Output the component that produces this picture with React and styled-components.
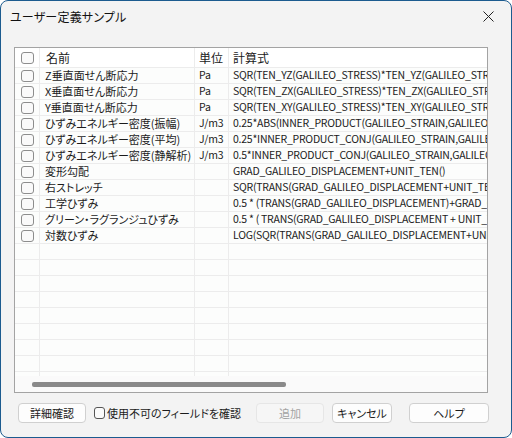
import React from "react";
import styled, { createGlobalStyle } from "styled-components";

const GlobalStyle = createGlobalStyle`
  html, body { margin: 0; padding: 0; background: #ffffff; }
  * { box-sizing: border-box; }
  body { font-family: "Noto Sans CJK JP", "Noto Sans", sans-serif; }
`;

const Window = styled.div`
  width: 512px;
  height: 438px;
  border: 1px solid #1c5b8f;
  border-radius: 8px;
  background: #f3f3f3;
  display: flex;
  flex-direction: column;
  overflow: hidden;
`;

const TitleBar = styled.div`
  height: 31px;
  display: flex;
  align-items: center;
  justify-content: space-between;
  padding: 0 9px 0 9px;
`;

const Title = styled.div`
  font-size: 12px;
  color: #111;
  font-feature-settings: "palt";
  letter-spacing: 0.2px;
`;

const CloseBtn = styled.div`
  width: 24px;
  height: 24px;
  display: flex;
  align-items: center;
  justify-content: center;
  margin-right: 2px;
`;

const Content = styled.div`
  flex: 1;
  display: flex;
  flex-direction: column;
  padding: 15px 23px 0 13px;
`;

const GridBox = styled.div`
  width: 474px;
  height: 346px;
  border: 1px solid #a3a3a3;
  background: #fcfdfc;
  display: flex;
  flex-direction: column;
  overflow: hidden;
`;

const RowsArea = styled.div`
  height: 328px;
  overflow: hidden;
`;

const Row = styled.div`
  display: grid;
  grid-template-columns: 25px 155px 34px 258px;
  height: ${(p) => (p.$header ? "20px" : "16px")};
  border-bottom: 1px solid #ececec;
  background: ${(p) => (p.$header ? "#ffffff" : "transparent")};
`;

const Cell = styled.div`
  border-right: ${(p) => (p.$last ? "none" : "1px solid #ececec")};
  display: flex;
  align-items: center;
  justify-content: ${(p) => (p.$center ? "center" : "flex-start")};
  padding-left: ${(p) => p.$pad || 0}px;
  font-size: ${(p) => (p.$header ? "12px" : p.$mono ? "10.5px" : "11px")};
  letter-spacing: ${(p) => (p.$mono ? "-0.25px" : "0")};
  color: #1b1b1b;
  white-space: nowrap;
  overflow: hidden;
  font-feature-settings: ${(p) => (p.$mono ? "normal" : "\"palt\"")};
  line-height: 1;
`;

const Check = styled.span`
  display: inline-block;
  width: 13px;
  height: 12px;
  border: 1px solid #8d8d8d;
  border-radius: 3px;
  background: #fafafa;
  margin-left: 1px;
`;

const ScrollTrack = styled.div`
  height: 16px;
  display: flex;
  align-items: center;
  padding-left: 17px;
  background: #fafafa;
`;

const Thumb = styled.div`
  height: 5px;
  width: 254px;
  border-radius: 2px;
  background: #8a8a8a;
`;

const ButtonBar = styled.div`
  display: flex;
  align-items: center;
  margin-top: 10px;
  padding-left: 4px;
  height: 20px;
`;

const Button = styled.button`
  height: 20px;
  width: ${(p) => p.$w}px;
  margin-left: ${(p) => p.$ml || 0}px;
  border: 1px solid ${(p) => (p.disabled ? "#e6e6e6" : "#d0d0d0")};
  border-radius: 4px;
  background: ${(p) => (p.disabled ? "#f6f6f6" : "#fdfdfd")};
  color: ${(p) => (p.disabled ? "#a3a3a3" : "#1b1b1b")};
  font-family: "Noto Sans CJK JP", "Noto Sans", sans-serif;
  font-size: 11px;
  font-feature-settings: "palt";
  padding: 0;
  display: flex;
  align-items: center;
  justify-content: center;
  flex-shrink: 0;
`;

const CheckLabel = styled.label`
  display: flex;
  align-items: center;
  margin-left: 8px;
  width: 162px;
  font-size: 11px;
  color: #1b1b1b;
  font-feature-settings: "palt";
  white-space: nowrap;
  gap: 2px;
  flex-shrink: 0;
`;

const BoxSmall = styled.span`
  width: 11px;
  height: 12px;
  border: 1px solid #555;
  border-radius: 3px;
  background: #fbfbfb;
  display: inline-block;
  flex-shrink: 0;
`;

const data = [
  ["Z垂直面せん断応力", "Pa", "SQR(TEN_YZ(GALILEO_STRESS)*TEN_YZ(GALILEO_STRESS))"],
  ["X垂直面せん断応力", "Pa", "SQR(TEN_ZX(GALILEO_STRESS)*TEN_ZX(GALILEO_STRESS))"],
  ["Y垂直面せん断応力", "Pa", "SQR(TEN_XY(GALILEO_STRESS)*TEN_XY(GALILEO_STRESS))"],
  ["ひずみエネルギー密度(振幅)", "J/m3", "0.25*ABS(INNER_PRODUCT(GALILEO_STRAIN,GALILEO_STRESS))"],
  ["ひずみエネルギー密度(平均)", "J/m3", "0.25*INNER_PRODUCT_CONJ(GALILEO_STRAIN,GALILEO_STRESS)"],
  ["ひずみエネルギー密度(静解析)", "J/m3", "0.5*INNER_PRODUCT_CONJ(GALILEO_STRAIN,GALILEO_STRESS)"],
  ["変形勾配", "", "GRAD_GALILEO_DISPLACEMENT+UNIT_TEN()"],
  ["右ストレッチ", "", "SQR(TRANS(GRAD_GALILEO_DISPLACEMENT+UNIT_TEN()))"],
  ["工学ひずみ", "", "0.5 * (TRANS(GRAD_GALILEO_DISPLACEMENT)+GRAD_GALILEO_DISPLACEMENT)"],
  ["グリーン・ラグランジュひずみ", "", "0.5 * ( TRANS(GRAD_GALILEO_DISPLACEMENT + UNIT_TEN()))"],
  ["対数ひずみ", "", "LOG(SQR(TRANS(GRAD_GALILEO_DISPLACEMENT+UNIT_TEN())))"],
];

export default function App() {
  const empties = Array.from({ length: 10 });
  return (
    <>
      <GlobalStyle />
      <Window>
        <TitleBar>
          <Title>ユーザー定義サンプル</Title>
          <CloseBtn>
            <svg width="11" height="11" viewBox="0 0 11 11">
              <path d="M0.5 0.5 L10.5 10.5 M10.5 0.5 L0.5 10.5" stroke="#222" strokeWidth="1" fill="none" />
            </svg>
          </CloseBtn>
        </TitleBar>
        <Content>
          <GridBox>
            <RowsArea>
              <Row $header>
                <Cell $center><Check /></Cell>
                <Cell $pad={6} $header>名前</Cell>
                <Cell $pad={4} $header>単位</Cell>
                <Cell $pad={4} $header $last>計算式</Cell>
              </Row>
              {data.map(([n, u, f]) => (
                <Row key={n}>
                  <Cell $center><Check /></Cell>
                  <Cell $pad={5}>{n}</Cell>
                  <Cell $pad={4} $mono>{u}</Cell>
                  <Cell $pad={4} $mono $last>{f}</Cell>
                </Row>
              ))}
              {empties.map((_, i) => (
                <Row key={"e" + i}>
                  <Cell />
                  <Cell />
                  <Cell />
                  <Cell $last />
                </Row>
              ))}
            </RowsArea>
            <ScrollTrack>
              <Thumb />
            </ScrollTrack>
          </GridBox>
          <ButtonBar>
            <Button $w={68}>詳細確認</Button>
            <CheckLabel>
              <BoxSmall />
              使用不可のフィールドを確認
            </CheckLabel>
            <Button $w={68} disabled>追加</Button>
            <Button $w={60} $ml={8}>キャンセル</Button>
            <Button $w={80} $ml={17}>ヘルプ</Button>
          </ButtonBar>
        </Content>
      </Window>
    </>
  );
}
